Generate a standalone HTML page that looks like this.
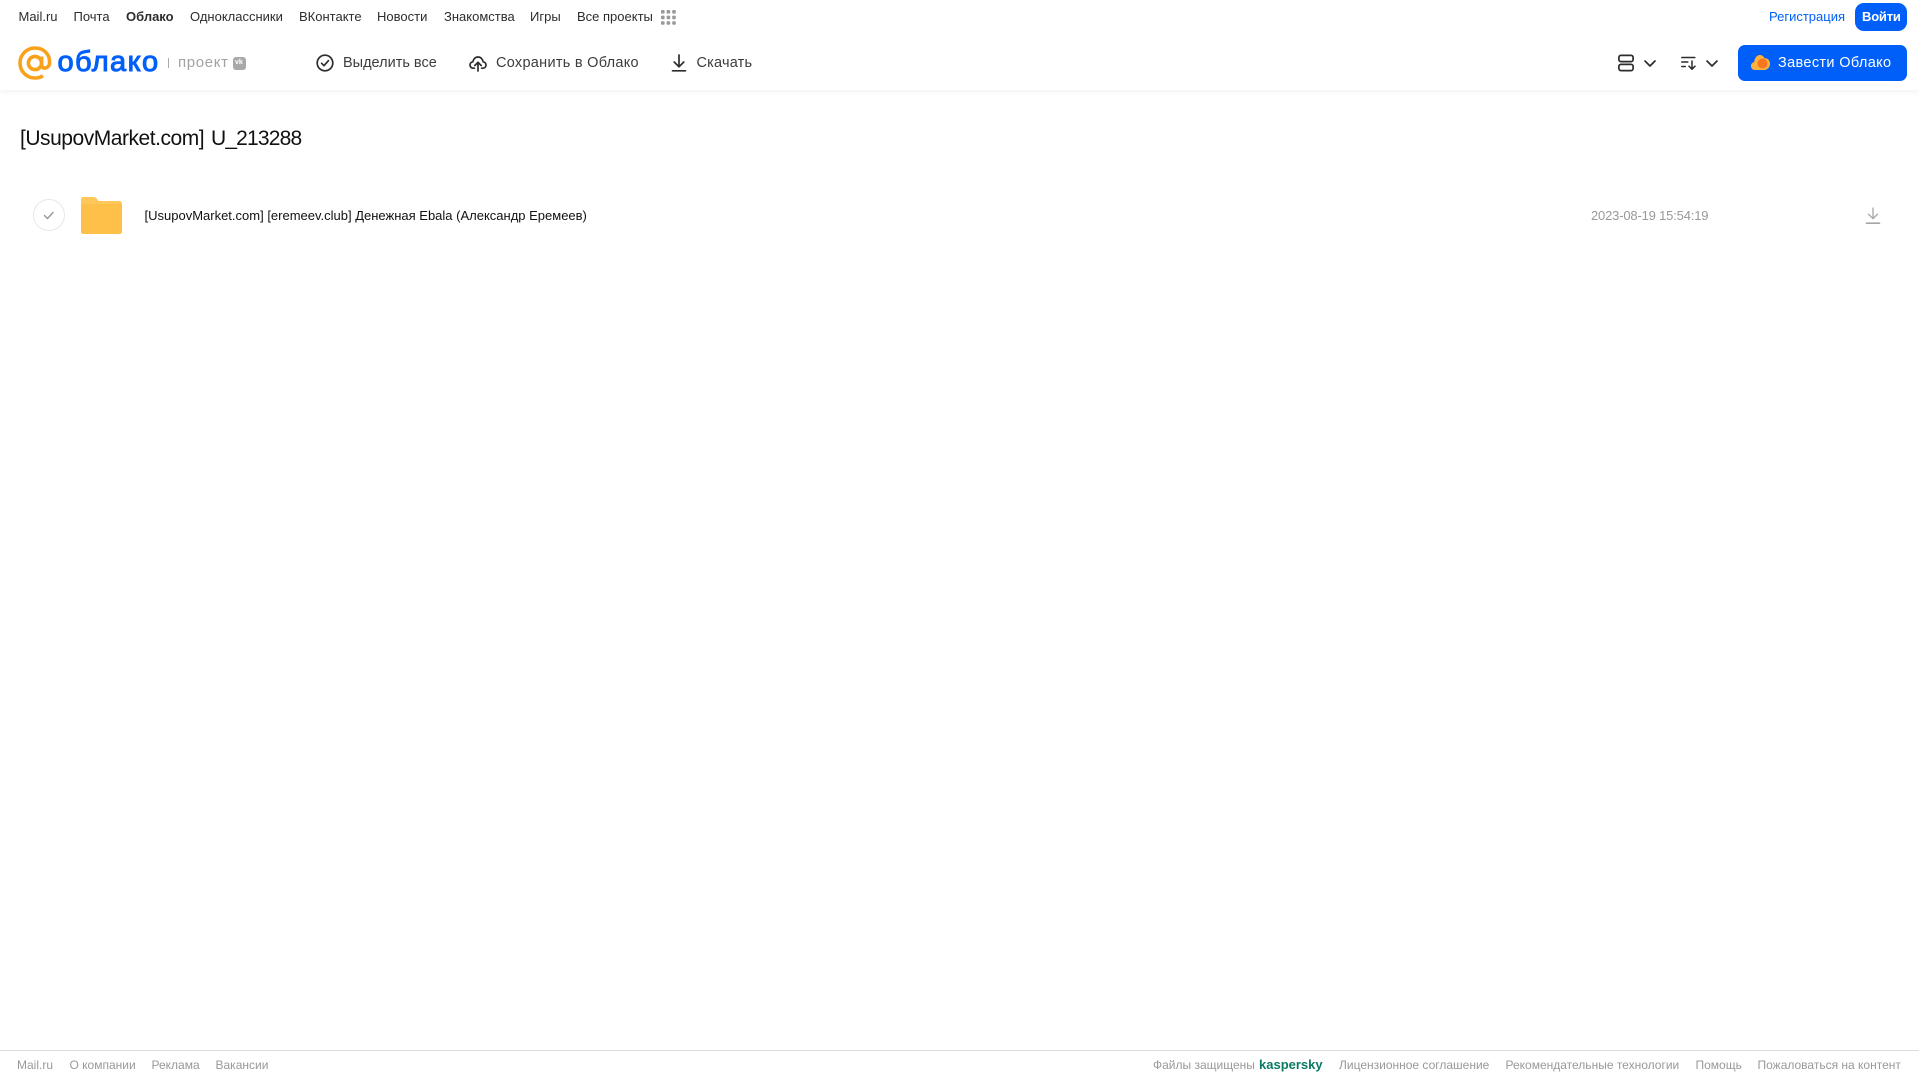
<!DOCTYPE html>
<html lang="ru"><head><meta charset="utf-8"><title>Облако</title>
<style>
html,body{margin:0;padding:0;background:#fff}
body{width:1919px;height:1079px;overflow:hidden;position:relative;font-family:"Liberation Sans",Arial,sans-serif}
.t{position:absolute;white-space:nowrap;line-height:20px;height:20px}
.n{top:7px;font-size:13px;color:#2c2d2e;letter-spacing:0}
.b{top:53px;font-size:14.5px;color:#3c3c3e}
.f{top:1055px;font-size:12px;color:#999;letter-spacing:0}
svg{position:absolute;overflow:visible}
#hd{position:absolute;left:0;top:0;width:1919px;height:90px;background:#fff;box-shadow:0 1px 6px rgba(0,0,0,.07)}
</style></head><body>
<div id="hd"></div>
<span class="t n" style="left:18.500px">Mail.ru</span>
<span class="t n" style="left:73.500px">Почта</span>
<span class="t n" style="left:126px;font-weight:700">Облако</span>
<span class="t n" style="left:190px">Одноклассники</span>
<span class="t n" style="left:299px">ВКонтакте</span>
<span class="t n" style="left:377px">Новости</span>
<span class="t n" style="left:444px">Знакомства</span>
<span class="t n" style="left:530px">Игры</span>
<span class="t n" style="left:577px">Все проекты</span>
<svg style="left:661px;top:10px" width="15" height="15" fill="#999"><rect x="0" y="0" width="3.6" height="3.6" rx="1"/><rect x="5.6" y="0" width="3.6" height="3.6" rx="1"/><rect x="11.2" y="0" width="3.6" height="3.6" rx="1"/><rect x="0" y="5.6" width="3.6" height="3.6" rx="1"/><rect x="5.6" y="5.6" width="3.6" height="3.6" rx="1"/><rect x="11.2" y="5.6" width="3.6" height="3.6" rx="1"/><rect x="0" y="11.2" width="3.6" height="3.6" rx="1"/><rect x="5.6" y="11.2" width="3.6" height="3.6" rx="1"/><rect x="11.2" y="11.2" width="3.6" height="3.6" rx="1"/></svg>
<span class="t n" style="left:1769px;color:#005ff9">Регистрация</span>
<div style="position:absolute;left:1855px;top:3px;width:52px;height:28px;border-radius:9px;background:#005ff9"></div>
<span class="t n" style="left:1862px;color:#fff;font-weight:700;letter-spacing:-.2px">Войти</span>

<svg style="left:18px;top:46px" width="34" height="34" viewBox="0 0 34 34" fill="none" stroke="#f9a11b" stroke-width="3.6"><circle cx="17" cy="17" r="6.6"/><path d="M23.6 10.5V19c0 4.6 7.6 4.2 8-2.2C32 8 25.500 2 17 2 8.700 2 2 8.700 2 17s6.700 15 15 15c3.200 0 5.700-.8 8-2.300"/></svg>
<span class="t" style="left:57.500px;top:44px;height:36px;line-height:36px;font-size:29px;font-weight:400;color:#005ff9;-webkit-text-stroke:1px #005ff9;font-family:'Liberation Sans',sans-serif;letter-spacing:1.400px">облако</span>
<div style="position:absolute;left:168px;top:58px;width:1px;height:10px;background:#aaa"></div>
<span class="t" style="left:178px;top:53px;font-size:15px;color:#a3a3a3;letter-spacing:.65px">проект</span>
<div style="position:absolute;left:233px;top:57px;width:13px;height:13px;border-radius:3px;background:#a9a9a9"></div>
<span class="t" style="left:235px;top:53px;font-size:7px;font-weight:700;color:#fff">vk</span>

<svg style="left:316px;top:54px" width="18" height="18" viewBox="0 0 18 18" fill="none" stroke="#2c2d2e" stroke-width="1.700" stroke-linecap="round" stroke-linejoin="round"><circle cx="9" cy="9" r="7.800"/><path d="M5.600 9.300l2.400 2.400 4.400-5"/></svg>
<span class="t b" style="left:343px;letter-spacing:0">Выделить все</span>
<svg style="left:469px;top:54px" width="18" height="18" viewBox="0 0 18 18" fill="none" stroke="#2c2d2e" stroke-width="1.700" stroke-linecap="round" stroke-linejoin="round"><path d="M5.400 14.200H4.200C2.300 14.200 1 12.800 1 11c0-1.700 1.200-3 2.900-3.200C4.300 5 6.400 3 9 3s4.700 2 5.100 4.800C15.800 8 17 9.300 17 11c0 1.800-1.300 3.200-3.200 3.200h-1.200"/><path d="M9 17V8.500M5.800 11.500L9 8.300l3.200 3.200"/></svg>
<span class="t b" style="left:496px;letter-spacing:.28px">Сохранить в Облако</span>
<svg style="left:671px;top:54px" width="16" height="18" viewBox="0 0 16 18" fill="none" stroke="#2c2d2e" stroke-width="1.700" stroke-linecap="round" stroke-linejoin="round"><path d="M8 1v11.500M3.200 8L8 12.800 12.800 8M1.500 16.800h13"/></svg>
<span class="t b" style="left:696.500px;letter-spacing:.2px">Скачать</span>

<svg style="left:1618px;top:54px" width="16" height="18" viewBox="0 0 16 18" fill="none" stroke="#2c2d2e" stroke-width="1.700"><rect x=".9" y="1.400" width="14.200" height="6.200" rx="2"/><rect x=".9" y="10.400" width="14.200" height="6.200" rx="2"/></svg>
<svg style="left:1644px;top:60px" width="12" height="7" viewBox="0 0 12 7" fill="none" stroke="#2c2d2e" stroke-width="1.700" stroke-linecap="round" stroke-linejoin="round"><path d="M1 1l5 5 5-5"/></svg>
<svg style="left:1681px;top:56px" width="16" height="14" viewBox="0 0 16 14" fill="none" stroke="#2c2d2e" stroke-width="1.500" stroke-linecap="round" stroke-linejoin="round"><path d="M.8 1.500h13M.8 6h6M.8 10.500h3.500M11 5v8M8 10.200l3 3 3-3"/></svg>
<svg style="left:1706px;top:60px" width="12" height="7" viewBox="0 0 12 7" fill="none" stroke="#2c2d2e" stroke-width="1.700" stroke-linecap="round" stroke-linejoin="round"><path d="M1 1l5 5 5-5"/></svg>

<div style="position:absolute;left:1738px;top:45px;width:169px;height:36px;border-radius:7px;background:#005ff9"></div>
<svg style="left:1751px;top:55px" width="19" height="15" viewBox="0 0 19 15"><path d="M4 15C1.800 15 0 13.300 0 11c0-2 1.300-3.600 3.200-3.900C3.600 3 6 0 8.700 0c2.200 0 4 1.300 4.800 3.300 3-.3 5.500 2 5.500 5.500 0 3.500-2.500 6.200-6 6.200z" fill="#ffb13d"/><circle cx="11.500" cy="8.500" r="5" fill="#f5761f"/></svg>
<span class="t b" style="left:1778px;color:#fff;letter-spacing:.35px">Завести Облако</span>

<span class="t" style="left:20px;top:126px;height:26px;line-height:26px;font-size:21px;color:#111;letter-spacing:-.47px;word-spacing:1.500px">[UsupovMarket.com] <span style="letter-spacing:-.82px">U_213288</span></span>

<div style="position:absolute;left:33px;top:199px;width:30px;height:30px;border:1px solid #e7e8ea;border-radius:50%"></div>
<svg style="left:43px;top:211px" width="12" height="9" viewBox="0 0 12 9" fill="none" stroke="#919399" stroke-width="1.300" stroke-linecap="round" stroke-linejoin="round"><path d="M1.500 4.500l3 3 5.500-6"/></svg>
<svg style="left:81px;top:197px" width="41" height="37" viewBox="0 0 41 37"><path d="M2 0h10.500c1.500 0 2.500.6 3.300 1.700L17.500 4H38.500A2.500 2.500 0 0 1 41 6.500V34.500a2.500 2.500 0 0 1-2.500 2.500H2.500A2.500 2.500 0 0 1 0 34.500V2a2 2 0 0 1 2-2z" fill="#ffc859"/><path d="M0 8.500Q0 7 2.500 7H38.500Q41 7 41 9.500V34.500a2.500 2.500 0 0 1-2.500 2.500H2.500A2.500 2.500 0 0 1 0 34.500z" fill="#ffc04a"/></svg>
<span class="t" style="left:144.500px;top:206px;font-size:13px;color:#111;letter-spacing:0">[UsupovMarket.com] [eremeev.club] Денежная Ebala (Александр Еремеев)</span>
<span class="t" style="left:1591px;top:206px;font-size:13px;color:#999;letter-spacing:-.18px">2023-08-19 15:54:19</span>
<svg style="left:1866px;top:207px" width="14" height="18" viewBox="0 0 14 18" fill="none" stroke="#a6a6a6" stroke-width="1.300" stroke-linecap="round" stroke-linejoin="round"><path d="M7 1v10.500M2.500 7.200L7 11.700l4.500-4.500"/><path d="M.5 16.200h13" stroke-width="1.600"/></svg>

<div style="position:absolute;left:0;top:1050px;width:1919px;height:1px;background:#dcdcdc"></div>
<span class="t f" style="left:17px">Mail.ru</span>
<span class="t f" style="left:69.500px">О компании</span>
<span class="t f" style="left:151.500px">Реклама</span>
<span class="t f" style="left:215.500px">Вакансии</span>
<span class="t f" style="left:1153px">Файлы защищены</span>
<span class="t f" style="left:1259px;color:#0b7a63;font-weight:700;font-size:13px;letter-spacing:0">kaspersky</span>
<span class="t f" style="left:1339px">Лицензионное соглашение</span>
<span class="t f" style="left:1505.500px">Рекомендательные технологии</span>
<span class="t f" style="left:1695.500px">Помощь</span>
<span class="t f" style="left:1757.500px">Пожаловаться на контент</span>
</body></html>
